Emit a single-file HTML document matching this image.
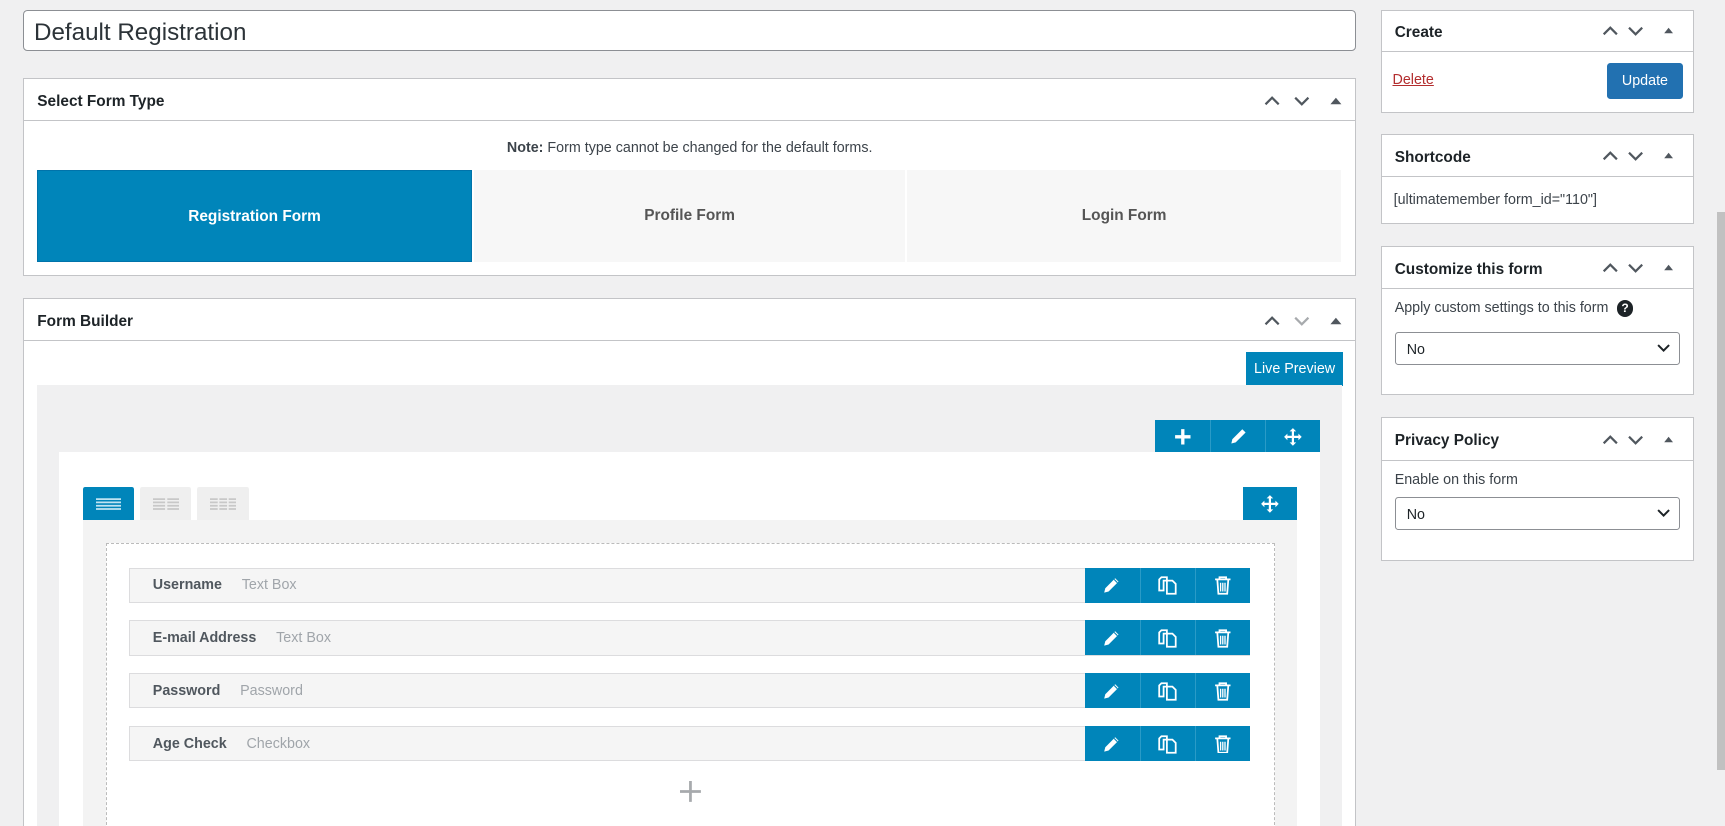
<!DOCTYPE html>
<html><head><style>
*{box-sizing:border-box;margin:0;padding:0}
html,body{width:1725px;height:826px;overflow:hidden;background:#f0f0f1}
#w{zoom:1.1;position:relative;width:1568px;height:751px;font-family:"Liberation Sans",sans-serif;color:#1d2327;font-size:13px}
.a{position:absolute}
.box{position:absolute;background:#fff;border:1px solid #c3c4c7}
.hd{position:absolute;left:0;right:0;top:0;border-bottom:1px solid #c3c4c7;font-size:14px;font-weight:bold;padding-left:12px;color:#1d2327}
.blue{background:#0085ba}
.btn3{position:absolute;display:flex}
.btn3 div{width:50px;height:100%;background:#0085ba;border-left:1px solid #2a9bc7;display:flex;align-items:center;justify-content:center}
.btn3 div:first-child{border-left:none}
.row{position:absolute;left:117px;width:1019px;height:32px;background:#f5f5f5;border:1px solid #dcdcde}
.row b{position:absolute;left:21px;top:8px;font-size:13px;color:#50575e}
.row span{color:#a0a5aa;font-weight:normal;margin-left:18px}
.row .btn3{right:-1px;top:-1px;height:32px}
.sel{position:absolute;left:12px;right:12px;height:30px;border:1px solid #8c8f94;border-radius:3px;padding:8px 10px;font-size:13px}
</style></head><body><div id="w">

<div class="a" style="left:21px;top:9px;width:1212px;height:37px;background:#fff;border:1px solid #8c8f94;border-radius:4px;font-size:22px;padding:7px 9px;color:#2c3338">Default Registration</div>

<div class="box" style="left:21px;top:71px;width:1212px;height:180px">
 <div class="hd" style="height:38px;line-height:41px">Select Form Type</div>
 <svg class="a" style="left:1124px;top:10px" width="80" height="20"><path d="M5 13l6-6 6 6" stroke="#50575e" stroke-width="2" fill="none"/><path d="M32 7l6 6 6-6" stroke="#50575e" stroke-width="2" fill="none"/><path d="M64 13l5-6 5 6z" fill="#50575e"/></svg>
 <div class="a" style="left:0;right:0;top:55px;text-align:center;font-size:13px;color:#3c434a"><b>Note:</b> Form type cannot be changed for the default forms.</div>
 <div class="a blue" style="left:12px;top:83px;width:395px;height:83px;color:#fff;font-weight:bold;font-size:14px;text-align:center;line-height:83px;border:1px solid #0073aa">Registration Form</div>
 <div class="a" style="left:409px;top:83px;width:392px;height:83px;background:#f7f7f7;color:#555;font-weight:bold;font-size:14px;text-align:center;line-height:83px">Profile Form</div>
 <div class="a" style="left:803px;top:83px;width:394px;height:83px;background:#f7f7f7;color:#555;font-weight:bold;font-size:14px;text-align:center;line-height:83px">Login Form</div>
</div>

<div class="box" style="left:21px;top:271px;width:1212px;height:500px">
 <div class="hd" style="height:38px;line-height:41px">Form Builder</div>
 <svg class="a" style="left:1124px;top:10px" width="80" height="20"><path d="M5 13l6-6 6 6" stroke="#50575e" stroke-width="2" fill="none"/><path d="M32 7l6 6 6-6" stroke="#a7aaad" stroke-width="2" fill="none"/><path d="M64 13l5-6 5 6z" fill="#50575e"/></svg>
 <div class="a blue" style="left:1111px;top:48px;width:88px;height:31px;color:#fff;font-size:13px;text-align:center;line-height:31px">Live Preview</div>
 <div class="a" style="left:12px;top:78px;width:1186px;height:430px;background:#f0f0f1"></div>
</div>
<div class="btn3" style="left:1050px;top:382px;height:30px"><div><svg width="16" height="16"><path d="M8 1v14M1 8h14" stroke="#fff" stroke-width="3"/></svg></div><div><svg width="18" height="18"><path d="M3 15l1-4 9-9 3 3-9 9z" fill="#fff"/></svg></div><div><svg width="18" height="18"><path d="M9 1l3 3h-2v4h4V6l3 3-3 3v-2h-4v4h2l-3 3-3-3h2v-4H4v2L1 9l3-3v2h4V4H6z" fill="#fff"/></svg></div></div>
<div class="a" style="left:54px;top:411px;width:1146px;height:340px;background:#fff"></div>
<div class="a blue" style="left:75px;top:443px;width:47px;height:31px;border-radius:2px 2px 0 0"><svg class="a" style="left:12px;top:10px" width="23" height="11"><path d="M0 1h23M0 4h23M0 7h23M0 10h23" stroke="#bfe3f2" stroke-width="1.6"/></svg></div>
<div class="a" style="left:127px;top:443px;width:47px;height:31px;background:#efefef;border-radius:2px 2px 0 0"><svg class="a" style="left:12px;top:10px" width="24" height="11"><path d="M0 1h11M0 4h11M0 7h11M0 10h11M13 1h11M13 4h11M13 7h11M13 10h11" stroke="#c8c8c8" stroke-width="1.6"/></svg></div>
<div class="a" style="left:179px;top:443px;width:47px;height:31px;background:#efefef;border-radius:2px 2px 0 0"><svg class="a" style="left:12px;top:10px" width="24" height="11"><path d="M0 1h7M0 4h7M0 7h7M0 10h7M8.5 1h7M8.5 4h7M8.5 7h7M8.5 10h7M17 1h7M17 4h7M17 7h7M17 10h7" stroke="#c8c8c8" stroke-width="1.6"/></svg></div>
<div class="a blue" style="left:1130px;top:443px;width:49px;height:31px;display:flex;align-items:center;justify-content:center"><svg width="18" height="18"><path d="M9 1l3 3h-2v4h4V6l3 3-3 3v-2h-4v4h2l-3 3-3-3h2v-4H4v2L1 9l3-3v2h4V4H6z" fill="#fff"/></svg></div>
<div class="a" style="left:75px;top:473px;width:1104px;height:278px;background:#f3f3f3"></div>
<div class="a" style="left:96px;top:494px;width:1063px;height:270px;background:#fff;border:1px dashed #bbb"></div>

<div class="row" style="top:516px"><b>Username<span>Text Box</span></b></div>
<div class="row" style="top:564px"><b>E-mail Address<span>Text Box</span></b></div>
<div class="row" style="top:612px"><b>Password<span>Password</span></b></div>
<div class="row" style="top:660px"><b>Age Check<span>Checkbox</span></b></div>
<svg class="a" style="left:618px;top:710px" width="19" height="19"><path d="M9.5 0v19M0 9.5h19" stroke="#a7aaad" stroke-width="2.5"/></svg>

<div class="box" style="left:1255px;top:9px;width:285px;height:94px">
 <div class="hd" style="height:37px;line-height:40px">Create</div>
 <svg class="a" style="left:195px;top:8px" width="80" height="20"><path d="M7 13l6-6 6 6" stroke="#50575e" stroke-width="2" fill="none"/><path d="M30 7l6 6 6-6" stroke="#50575e" stroke-width="2" fill="none"/><path d="M62 12l4-5 4 5z" fill="#50575e"/></svg>
 <div class="a" style="left:10px;top:56px;color:#b32d2e;text-decoration:underline;font-size:13px">Delete</div>
 <div class="a" style="left:205px;top:47px;width:69px;height:33px;background:#2271b1;border-radius:3px;color:#fff;text-align:center;line-height:33px;font-size:13px">Update</div>
</div>
<div class="box" style="left:1255px;top:122px;width:285px;height:82px">
 <div class="hd" style="height:38px;line-height:41px">Shortcode</div>
 <svg class="a" style="left:195px;top:9px" width="80" height="20"><path d="M7 13l6-6 6 6" stroke="#50575e" stroke-width="2" fill="none"/><path d="M30 7l6 6 6-6" stroke="#50575e" stroke-width="2" fill="none"/><path d="M62 12l4-5 4 5z" fill="#50575e"/></svg>
 <div class="a" style="left:11px;top:52px;font-size:13px;color:#3c434a">[ultimatemember form_id="110"]</div>
</div>
<div class="box" style="left:1255px;top:224px;width:285px;height:135px">
 <div class="hd" style="height:38px;line-height:41px">Customize this form</div>
 <svg class="a" style="left:195px;top:9px" width="80" height="20"><path d="M7 13l6-6 6 6" stroke="#50575e" stroke-width="2" fill="none"/><path d="M30 7l6 6 6-6" stroke="#50575e" stroke-width="2" fill="none"/><path d="M62 12l4-5 4 5z" fill="#50575e"/></svg>
 <div class="a" style="left:12px;top:48px;font-size:13px;color:#3c434a">Apply custom settings to this form <span style="display:inline-block;width:15px;height:15px;border-radius:50%;background:#1d2327;color:#fff;font-size:11px;font-weight:bold;text-align:center;line-height:15px;margin-left:4px">?</span></div>
 <div class="sel" style="top:77px">No<svg class="a" style="right:8px;top:10px" width="12" height="8"><path d="M1 1l5 5 5-5" stroke="#1d2327" stroke-width="1.8" fill="none"/></svg></div>
</div>
<div class="box" style="left:1255px;top:379px;width:285px;height:131px">
 <div class="hd" style="height:39px;line-height:42px">Privacy Policy</div>
 <svg class="a" style="left:195px;top:10px" width="80" height="20"><path d="M7 13l6-6 6 6" stroke="#50575e" stroke-width="2" fill="none"/><path d="M30 7l6 6 6-6" stroke="#50575e" stroke-width="2" fill="none"/><path d="M62 12l4-5 4 5z" fill="#50575e"/></svg>
 <div class="a" style="left:12px;top:49px;font-size:13px;color:#3c434a">Enable on this form</div>
 <div class="sel" style="top:72px">No<svg class="a" style="right:8px;top:10px" width="12" height="8"><path d="M1 1l5 5 5-5" stroke="#1d2327" stroke-width="1.8" fill="none"/></svg></div>
</div>
<div class="a" style="left:1561px;top:193px;width:7px;height:507px;background:#c1c1c1"></div>
</div>
<script>
var ic='<div><svg width="18" height="18"><path d="M2 16l1-4 9-9 3 3-9 9z" fill="#fff"/><path d="M11 4l3 3" stroke="#0085ba" stroke-width="1"/></svg></div><div><svg width="20" height="20"><path d="M4 3h5v3H6v9H2V5z" fill="none" stroke="#fff" stroke-width="1.6"/><path d="M9 6h5l3 3v9H9z" fill="none" stroke="#fff" stroke-width="1.6"/></svg></div><div><svg width="16" height="18"><path d="M1 4h14M5 4V2h6v2M3 4l1 13h8l1-13" fill="none" stroke="#fff" stroke-width="1.6"/><path d="M6 7v8M8 7v8M10 7v8" stroke="#fff" stroke-width="1.2"/></svg></div>';
document.querySelectorAll('.row').forEach(function(r){var d=document.createElement('div');d.className='btn3';d.innerHTML=ic;r.appendChild(d);});
</script>
</body></html>
